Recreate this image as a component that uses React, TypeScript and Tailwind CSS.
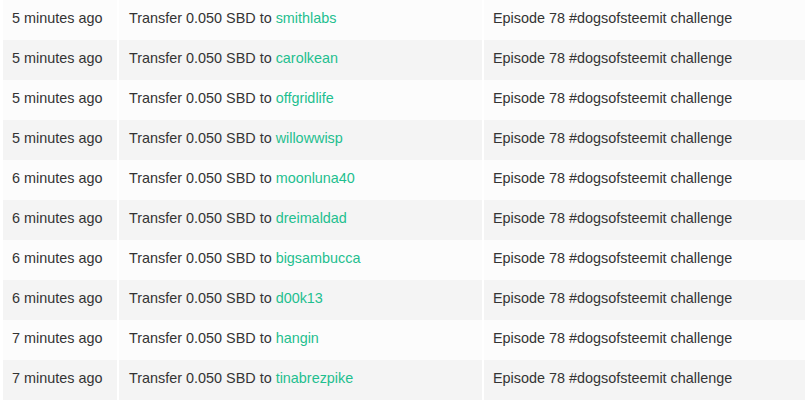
import React from 'react';

const rows = [
  { time: '5 minutes ago', to: 'smithlabs' },
  { time: '5 minutes ago', to: 'carolkean' },
  { time: '5 minutes ago', to: 'offgridlife' },
  { time: '5 minutes ago', to: 'willowwisp' },
  { time: '6 minutes ago', to: 'moonluna40' },
  { time: '6 minutes ago', to: 'dreimaldad' },
  { time: '6 minutes ago', to: 'bigsambucca' },
  { time: '6 minutes ago', to: 'd00k13' },
  { time: '7 minutes ago', to: 'hangin' },
  { time: '7 minutes ago', to: 'tinabrezpike' },
];

export default function App() {
  return (
    <div
      className="w-[805px] h-[402px] overflow-hidden bg-white pl-[3px] text-[14.4px] text-[#333333]"
      style={{ fontFamily: '"Liberation Sans", Arial, sans-serif' }}
    >
      {rows.map((r, i) => {
        const bg = i % 2 === 0 ? 'bg-[#fcfcfc]' : 'bg-[#f4f4f4]';
        return (
          <div key={i} className="flex gap-[2px] h-10">
            <div className={`${bg} w-[114px] shrink-0 pt-2 pl-[9px] leading-5 whitespace-nowrap`}>
              {r.time}
            </div>
            <div className={`${bg} w-[363px] shrink-0 pt-2 pl-[10px] leading-5 whitespace-nowrap`}>
              Transfer 0.050 SBD to <a className="text-[#1fbf8f]">{r.to}</a>
            </div>
            <div className={`${bg} flex-1 pt-2 pl-[9px] leading-5 whitespace-nowrap`}>
              Episode 78 #dogsofsteemit challenge
            </div>
          </div>
        );
      })}
    </div>
  );
}
